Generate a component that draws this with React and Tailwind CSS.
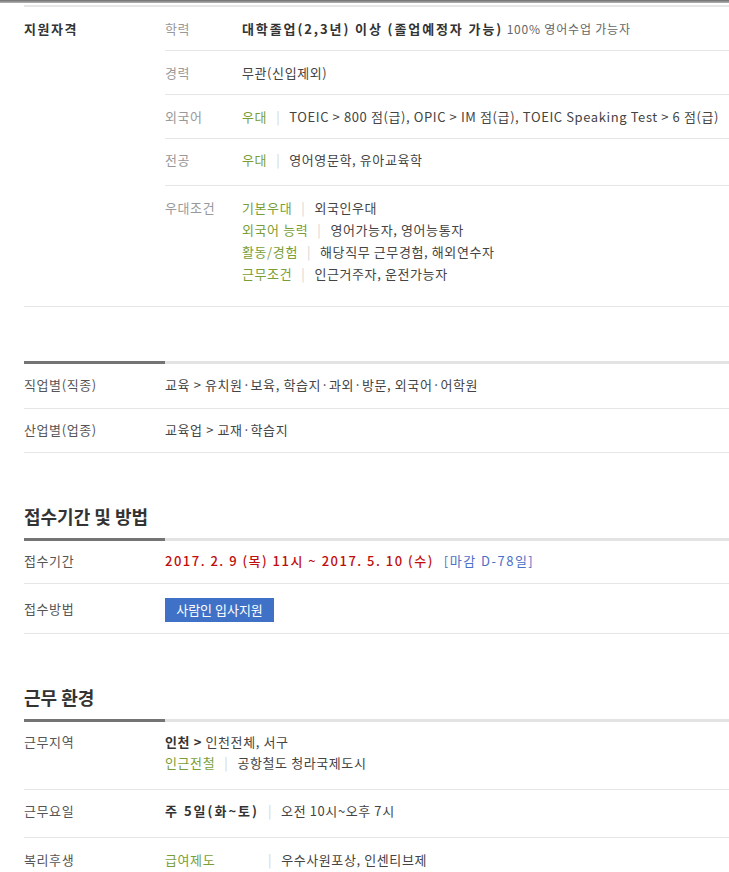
const font = { fontFamily: '"Noto Sans CJK KR", "Noto Sans", sans-serif' }

function Bar() {
  return <span className="mx-[9px] text-[#d4d4d4]">|</span>
}

function Green({ children }) {
  return <span className="text-[#7a9e36]">{children}</span>
}

function SectionLine() {
  return (
    <div className="flex items-start">
      <div className="h-[3px] w-[141px] bg-[#747474]" />
      <div className="h-[3px] flex-1 bg-[#e3e3e3]" />
    </div>
  )
}

function Row({ label, children, className = '' }) {
  return (
    <div className={`flex border-b border-[#e6e6e6] ${className}`}>
      <div className="w-[141px] shrink-0 text-[#555]">{label}</div>
      <div className="flex-1">{children}</div>
    </div>
  )
}

function SubRow({ label, children, last, className = '' }) {
  return (
    <div className={`flex ${last ? '' : 'border-b border-[#e6e6e6]'} ${className}`}>
      <div className="w-[77px] shrink-0 text-[#999]">{label}</div>
      <div className="flex-1 whitespace-nowrap text-[#444]">{children}</div>
    </div>
  )
}

export default function App() {
  return (
    <div
      className="min-h-[872px] overflow-hidden bg-white text-[13px] leading-[22px] tracking-[0.6px]"
      style={font}
    >
      <div className="h-[3px] bg-gradient-to-b from-[#6f6f6f] to-[#b5b5b5]" />

      <div className="pl-[24px]">
        <div className="mt-[2px] h-[2px] bg-[#e6e6e6]" />

        {/* 지원자격 */}
        <div className="flex border-b border-[#e6e6e6] pb-[21px]">
          <div className="w-[141px] shrink-0 pt-[11px] font-bold tracking-[1.5px] text-[#333]">지원자격</div>
          <div className="flex-1">
            <SubRow label="학력" className="pb-[10px] pt-[11px]">
              <span className="font-bold tracking-[1.9px] text-[#333]">대학졸업(2,3년) 이상 (졸업예정자 가능)</span>{' '}
              <span className="text-[12px] tracking-[0.8px] text-[#666]">100% 영어수업 가능자</span>
            </SubRow>
            <SubRow label="경력" className="pb-[10px] pt-[11px]">무관(신입제외)</SubRow>
            <SubRow label="외국어" className="pb-[10px] pt-[11px]">
              <Green>우대</Green>
              <Bar />
              TOEIC &gt; 800 점(급), OPIC &gt; IM 점(급), TOEIC Speaking Test &gt; 6 점(급)
            </SubRow>
            <SubRow label="전공" className="pb-[14px] pt-[10px]">
              <Green>우대</Green>
              <Bar />
              영어영문학, 유아교육학
            </SubRow>
            <SubRow label="우대조건" last className="pt-[11px]">
              <div>
                <Green>기본우대</Green>
                <Bar />
                외국인우대
              </div>
              <div>
                <Green>외국어 능력</Green>
                <Bar />
                영어가능자, 영어능통자
              </div>
              <div>
                <Green>활동/경험</Green>
                <Bar />
                해당직무 근무경험, 해외연수자
              </div>
              <div>
                <Green>근무조건</Green>
                <Bar />
                인근거주자, 운전가능자
              </div>
            </SubRow>
          </div>
        </div>

        {/* 직종 */}
        <div className="mt-[54px]">
          <SectionLine />
          <Row label="직업별(직종)" className="pb-[12px] pt-[10px]">
            <span className="text-[#444]">교육 &gt; 유치원·보육, 학습지·과외·방문, 외국어·어학원</span>
          </Row>
          <Row label="산업별(업종)" className="pb-[11px] pt-[10px]">
            <span className="text-[#444]">교육업 &gt; 교재·학습지</span>
          </Row>
        </div>

        {/* 접수기간 및 방법 */}
        <div className="mt-[50px]">
          <h2 className="pb-[9px] text-[18px] font-bold leading-[26px] tracking-normal text-[#333]">
            접수기간 및 방법
          </h2>
          <SectionLine />
          <Row label="접수기간" className="pb-[11px] pt-[9px]">
            <span className="font-medium tracking-[1.5px] text-[#c00d0d]">
              2017. 2. 9 (목) 11시 ~ 2017. 5. 10 (수)
            </span>
            <span className="ml-[10px] tracking-[1.5px] text-[#4c6fc7]">[마감 D-78일]</span>
          </Row>
          <Row label="접수방법" className="pb-[11px] pt-[14px]">
            <button
              type="button"
              className="h-[24px] w-[109px] bg-[#3f72c6] text-[13px] leading-[24px] tracking-normal text-white"
            >
              사람인 입사지원
            </button>
          </Row>
        </div>

        {/* 근무 환경 */}
        <div className="mt-[50px]">
          <h2 className="pb-[9px] text-[18px] font-bold leading-[26px] tracking-normal text-[#333]">
            근무 환경
          </h2>
          <SectionLine />
          <Row label="근무지역" className="pb-[16px] pt-[9px]">
            <div className="leading-[21px] text-[#444]">
              <span className="font-bold text-[#333]">인천 &gt;</span> 인천전체, 서구
            </div>
            <div className="leading-[21px] text-[#444]">
              <Green>인근전철</Green>
              <Bar />
              공항철도 청라국제도시
            </div>
          </Row>
          <Row label="근무요일" className="pb-[15px] pt-[10px]">
            <span className="font-bold tracking-[2px] text-[#333]">주 5일(화~토)</span>
            <Bar />
            <span className="text-[#444]">오전 10시~오후 7시</span>
          </Row>
          <div className="flex pt-[11px]">
            <div className="w-[141px] shrink-0 text-[#555]">복리후생</div>
            <div className="flex flex-1 text-[#444]">
              <span className="w-[103px]">
                <Green>급여제도</Green>
              </span>
              <span className="mr-[9px] text-[#d4d4d4]">|</span>
              우수사원포상, 인센티브제
            </div>
          </div>
        </div>
      </div>
    </div>
  )
}
